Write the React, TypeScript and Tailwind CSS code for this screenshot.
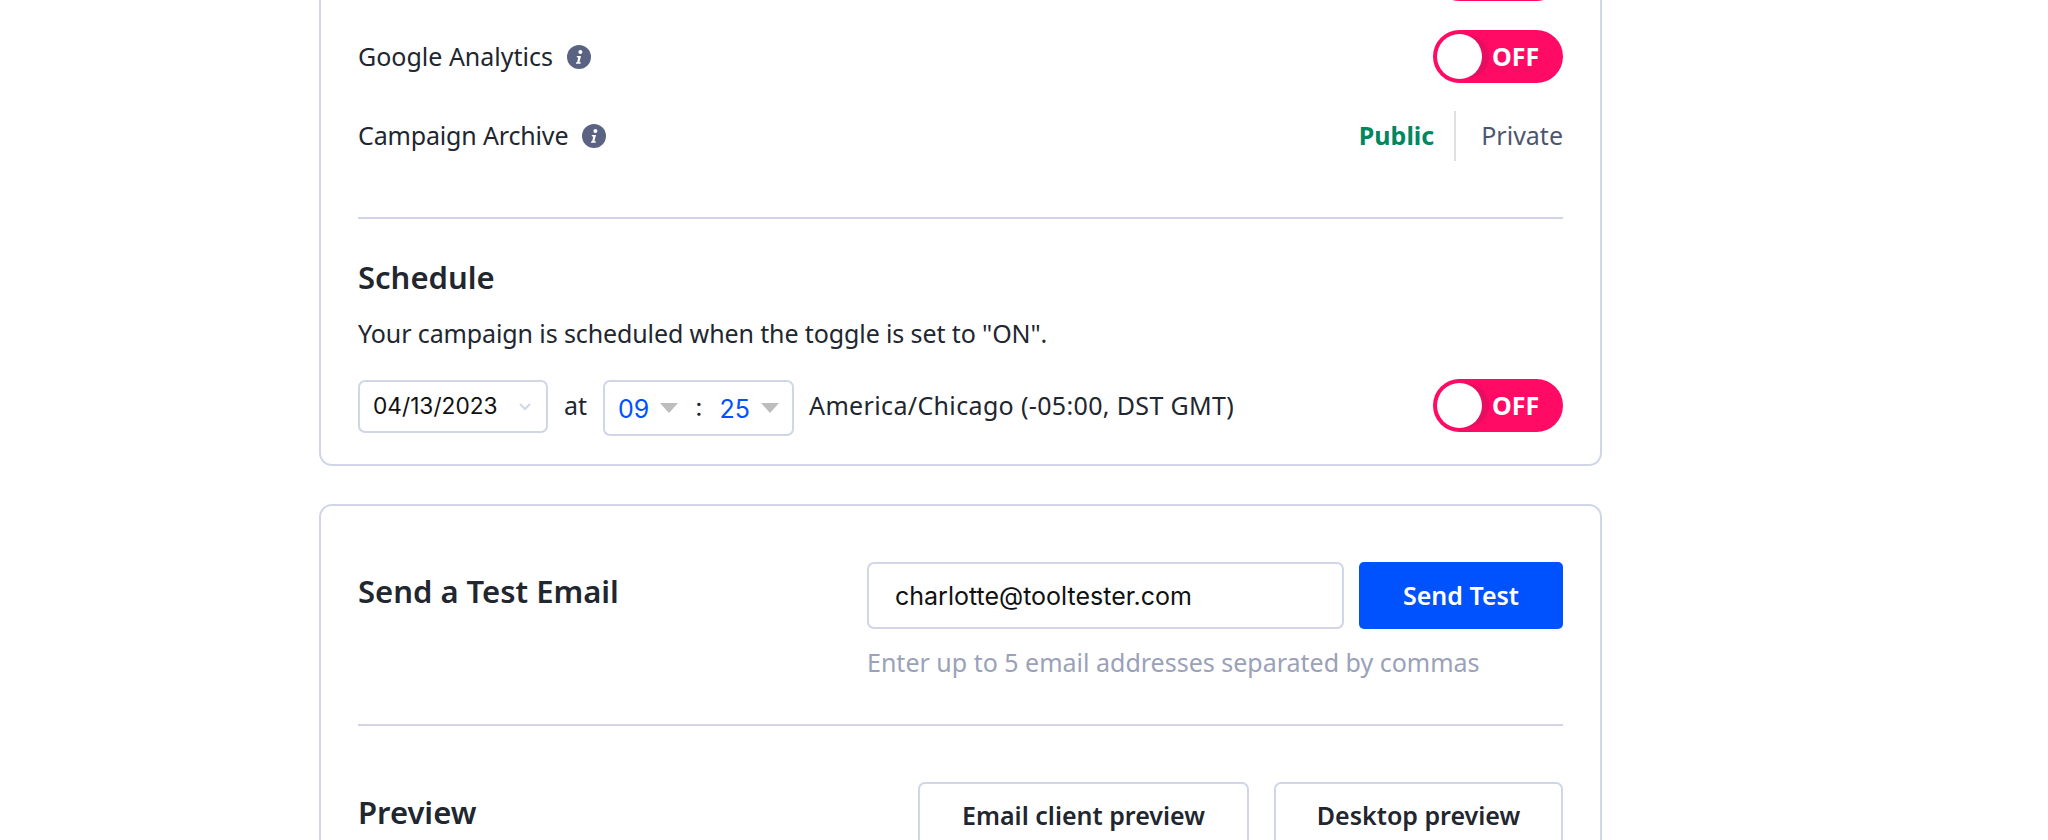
import type { ReactNode } from "react";

function InfoIcon() {
  return (
    <svg width="24" height="24" viewBox="0 0 24 24" className="shrink-0">
      <circle cx="12" cy="12" r="12" fill="#5a6482" />
      <circle cx="13.4" cy="7" r="2" fill="#fff" />
      <path
        d="M9.6 11h4.4l-1.6 6.2h1.5l-.4 1.6H8.9l.4-1.6h.9l1-4.6h-1z"
        fill="#fff"
      />
    </svg>
  );
}

function OffToggle({ className = "" }: { className?: string }) {
  return (
    <div className={`relative flex h-[53px] w-[130px] shrink-0 items-center rounded-full bg-[#ff0a64] pl-[4px] ${className}`}>
      <div className="size-[45px] rounded-full bg-white shadow-[8px_0_0_-1px_#e80d60]" />
      <span className="ml-[10px] text-[25px] font-bold leading-none text-white">OFF</span>
    </div>
  );
}

function Card({ children, className = "" }: { children: ReactNode; className?: string }) {
  return (
    <section className={`rounded-[13px] border-2 border-[#d0d6e8] bg-white px-[37px] ${className}`}>
      {children}
    </section>
  );
}

function Label({ children }: { children: ReactNode }) {
  return (
    <div className="flex items-center gap-[14px] text-[25px] text-[#21262f]">
      <span>{children}</span>
      <InfoIcon />
    </div>
  );
}

function TimeCaret() {
  return <span className="block h-0 w-0 border-x-[9px] border-t-[10px] border-x-transparent border-t-[#bdbdbd]" />;
}

function PreviewButton({ children, className }: { children: ReactNode; className: string }) {
  return (
    <button className={`flex h-[68px] items-center justify-center rounded-[7px] border-2 border-[#d0d6e8] bg-white text-[25px] font-semibold text-[#21262f] ${className}`}>
      {children}
    </button>
  );
}

export default function App() {
  return (
    <div className="h-[840px] overflow-hidden bg-white font-['Noto_Sans',sans-serif]">
      <div className="ml-[319px] w-[1283px]">
        <Card className="-mt-[52px] rounded-t-none border-t-0 pb-[28px]">
          <div className="flex h-[53px] justify-end">
            <div className="h-[53px] w-[130px] rounded-full bg-[#ff0a64]" />
          </div>

          <div className="mt-[29px] flex h-[53px] items-center justify-between">
            <Label>Google Analytics</Label>
            <OffToggle />
          </div>

          <div className="mt-[28px] flex h-[50px] items-center justify-between">
            <Label><span className="tracking-[-0.16px]">Campaign Archive</span></Label>
            <div className="flex h-full items-center text-[25px]">
              <span className="font-bold text-[#00875f]">Public</span>
              <span className="ml-[20px] mr-[25px] h-full w-[2px] bg-[#e0e0e0]" />
              <span className="text-[#4d566f]">Private</span>
            </div>
          </div>

          <div className="mt-[56px] h-[2px] bg-[#d0d6e8]" />

          <h2 className="mt-[38px] text-[31px] font-semibold leading-[40px] text-[#21262f]">Schedule</h2>
          <p className="mt-[16px] text-[25px] leading-[40px] tracking-[-0.11px] text-[#21262f]">
            Your campaign is scheduled when the toggle is set to "ON".
          </p>

          <div className="mt-[27px] flex items-start text-[25px] text-[#21262f]">
            <div className="flex h-[53px] w-[190px] items-center justify-between rounded-[7px] border-2 border-[#d0d6e8] pl-[13px] pr-[14px] font-['Inter',sans-serif] text-[22.7px] text-[#111]">
              <span>04/13/2023</span>
              <svg width="14" height="9" viewBox="0 0 14 9" fill="none" stroke="#d0d6e8" strokeWidth="2">
                <path d="M2 2l5 5 5-5" />
              </svg>
            </div>
            <span className="ml-[16px] flex h-[52px] items-center">at</span>
            <div className="ml-[16px] flex h-[56px] w-[191px] items-center rounded-[7px] border-2 border-[#d0d6e8] pl-[13px] font-['Inter',sans-serif] text-[#0052ff]">
              <span className="mt-[4px]">09</span>
              <span className="ml-[11px]"><TimeCaret /></span>
              <span className="ml-[17px] text-[#21262f]">:</span>
              <span className="ml-[17px] mt-[4px]">25</span>
              <span className="ml-[11px]"><TimeCaret /></span>
            </div>
            <span className="ml-[15px] flex h-[52px] items-center tracking-[0.35px]">America/Chicago (-05:00, DST GMT)</span>
            <OffToggle className="ml-auto -mt-[1px]" />
          </div>
        </Card>

        <Card className="mt-[38px] h-[400px] pt-[56px]">
          <div className="flex items-start justify-between">
            <h2 className="mt-[9px] text-[31px] font-semibold leading-[40px] text-[#21262f]">Send a Test Email</h2>
            <div className="w-[696px]">
              <div className="flex gap-[15px]">
                <input
                  readOnly
                  value="charlotte@tooltester.com"
                  className="h-[67px] w-[477px] rounded-[7px] border-2 border-[#d0d6e8] bg-white pl-[26px] font-['Inter',sans-serif] text-[25px] text-[#111] outline-none"
                />
                <button className="h-[67px] w-[204px] rounded-[5px] bg-[#0052ff] text-[25px] font-semibold text-white">
                  Send Test
                </button>
              </div>
              <p className="mt-[17px] text-[25px] leading-[32px] text-[#9aa1b9]">
                Enter up to 5 email addresses separated by commas
              </p>
            </div>
          </div>

          <div className="mt-[46px] h-[2px] bg-[#d0d6e8]" />

          <div className="mt-[56px] flex items-start justify-between">
            <h2 className="mt-[10px] text-[31px] font-semibold leading-[40px] text-[#21262f]">Preview</h2>
            <div className="flex gap-[25px]">
              <PreviewButton className="w-[331px]">Email client preview</PreviewButton>
              <PreviewButton className="w-[289px]">Desktop preview</PreviewButton>
            </div>
          </div>
        </Card>
      </div>
    </div>
  );
}
